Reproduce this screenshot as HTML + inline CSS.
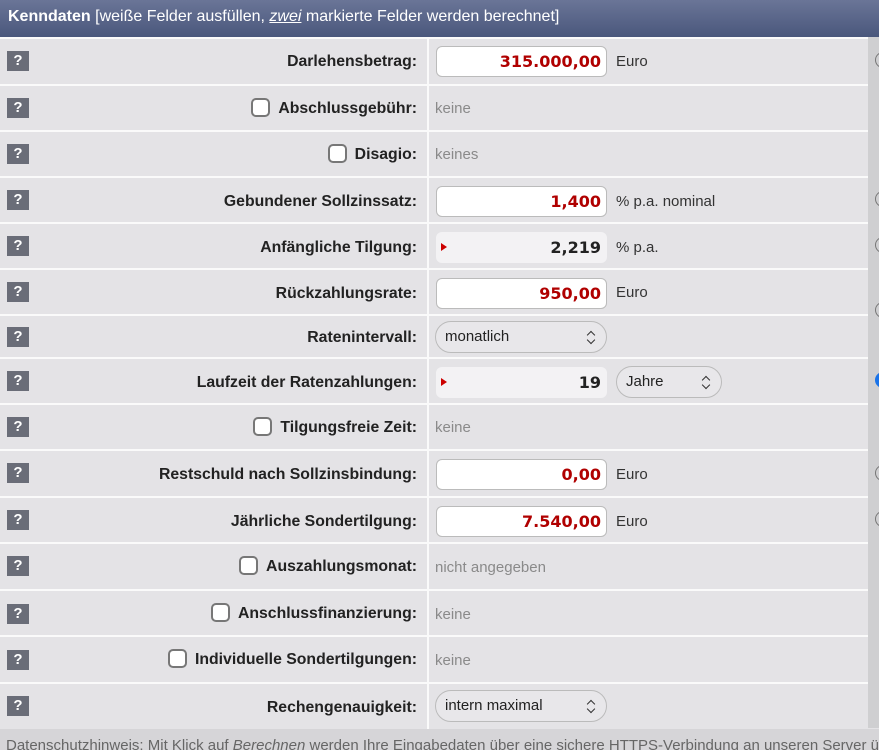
<!DOCTYPE html>
<html><head><meta charset="utf-8"><style>
*{box-sizing:border-box;margin:0;padding:0}
html,body{width:879px;height:750px;overflow:hidden}
body{background:#e4e3e6;font-family:"Liberation Sans",Arial,sans-serif;position:relative}
.hdr{position:absolute;left:0;top:0;width:879px;height:37px;background:linear-gradient(#6a7597,#4a577c);color:#fff;font-size:16px;padding:8px 0 0 8px;white-space:nowrap;overflow:hidden}
.row{position:absolute;left:0;width:868px;border-top:2px solid #fafafa}
.q{position:absolute;left:7px;width:22px;height:20px;background:#6a6d78;color:#fff;font-weight:bold;font-size:15px;text-align:center;line-height:20px}
.lab{position:absolute;right:451px;font-weight:bold;font-size:15.8px;color:#222;white-space:nowrap}
.vl{position:absolute;left:427px;top:0;bottom:0;border-left:2px solid #fafafa}
.cb{display:inline-block;width:19px;height:19px;border:2px solid #777;border-radius:5px;background:#fff;vertical-align:-4px;margin-right:8px}
.grey{position:absolute;left:435px;font-size:15px;color:#8a8a8a}
.inp{position:absolute;left:436px;width:171px;height:31px;background:#fff;border:1px solid #bbb;border-radius:6px;text-align:right;padding-right:5px;font-family:"DejaVu Sans",sans-serif;font-weight:bold;font-size:16px;color:#b00000;line-height:29px}
.calc{background:#f3f2f4;border-color:#f3f2f4;color:#222}
.calc:before{content:"";position:absolute;left:4px;top:10px;border-left:6px solid #c00;border-top:4.5px solid transparent;border-bottom:4.5px solid transparent}
.unit{position:absolute;font-size:15px;color:#333}
.sel{position:absolute;height:32px;border:1px solid #bbb;border-radius:16px;background:#e8e7ea;font-size:15px;color:#222;padding:6px 0 0 9px}
.sel:after{content:"";position:absolute;right:12px;top:10px;width:5px;height:5px;border-left:1.6px solid #333;border-top:1.6px solid #333;transform:rotate(45deg)}
.sel:before{content:"";position:absolute;right:12px;top:15px;width:5px;height:5px;border-right:1.6px solid #333;border-bottom:1.6px solid #333;transform:rotate(45deg)}
.rc{position:absolute;left:868px;width:11px;top:37px;height:691px;background:#cfcfd1;overflow:hidden}
.rad{position:absolute;left:7px;width:16px;height:16px;border:1.5px solid #777;border-radius:50%}
.foot{position:absolute;left:0;top:729px;width:879px;height:21px;background:#d6d5d8;color:#666;font-size:15px;padding:8px 0 0 6px;white-space:nowrap;overflow:hidden}
</style></head><body>
<div class="hdr"><b>Kenndaten</b> [weiße Felder ausfüllen, <i><u>zwei</u></i> markierte Felder werden berechnet]</div>
<div class="rc">
<div class="rad" style="top:15px"></div>
<div class="rad" style="top:154px"></div>
<div class="rad" style="top:200px"></div>
<div class="rad" style="top:265px"></div>
<div class="rad" style="top:335px;background:#1a73e8;border-color:#1a73e8"></div>
<div class="rad" style="top:428px"></div>
<div class="rad" style="top:474px"></div>
</div>

<div class="row" style="top:37px;height:47px"><div class="vl"></div><div class="q" style="top:12px">?</div><div class="lab" style="top:14px">Darlehensbetrag:</div><div class="inp" style="top:7px">315.000,00</div><div class="unit" style="left:616px;top:14px">Euro</div></div>
<div class="row" style="top:84px;height:46px"><div class="vl"></div><div class="q" style="top:12px">?</div><div class="lab" style="top:12px"><span class="cb"></span>Abschlussgebühr:</div><div class="grey" style="top:14px">keine</div></div>
<div class="row" style="top:130px;height:46px"><div class="vl"></div><div class="q" style="top:12px">?</div><div class="lab" style="top:12px"><span class="cb"></span>Disagio:</div><div class="grey" style="top:14px">keines</div></div>
<div class="row" style="top:176px;height:46px"><div class="vl"></div><div class="q" style="top:12px">?</div><div class="lab" style="top:15px">Gebundener Sollzinssatz:</div><div class="inp" style="top:8px">1,400</div><div class="unit" style="left:616px;top:15px">% p.a. nominal</div></div>
<div class="row" style="top:222px;height:46px"><div class="vl"></div><div class="q" style="top:12px">?</div><div class="lab" style="top:15px">Anfängliche Tilgung:</div><div class="inp calc" style="top:8px">2,219</div><div class="unit" style="left:616px;top:15px">% p.a.</div></div>
<div class="row" style="top:268px;height:46px"><div class="vl"></div><div class="q" style="top:12px">?</div><div class="lab" style="top:15px">Rückzahlungsrate:</div><div class="inp" style="top:8px">950,00</div><div class="unit" style="left:616px;top:14px">Euro</div></div>
<div class="row" style="top:314px;height:43px"><div class="vl"></div><div class="q" style="top:11px">?</div><div class="lab" style="top:13px">Ratenintervall:</div><div class="sel" style="left:435px;top:5px;width:172px">monatlich</div></div>
<div class="row" style="top:357px;height:46px"><div class="vl"></div><div class="q" style="top:12px">?</div><div class="lab" style="top:15px">Laufzeit der Ratenzahlungen:</div><div class="inp calc" style="top:8px">19</div><div class="sel" style="left:616px;top:7px;width:106px">Jahre</div></div>
<div class="row" style="top:403px;height:46px"><div class="vl"></div><div class="q" style="top:12px">?</div><div class="lab" style="top:12px"><span class="cb"></span>Tilgungsfreie Zeit:</div><div class="grey" style="top:14px">keine</div></div>
<div class="row" style="top:449px;height:47px"><div class="vl"></div><div class="q" style="top:12px">?</div><div class="lab" style="top:15px">Restschuld nach Sollzinsbindung:</div><div class="inp" style="top:8px">0,00</div><div class="unit" style="left:616px;top:15px">Euro</div></div>
<div class="row" style="top:496px;height:46px"><div class="vl"></div><div class="q" style="top:12px">?</div><div class="lab" style="top:15px">Jährliche Sondertilgung:</div><div class="inp" style="top:8px">7.540,00</div><div class="unit" style="left:616px;top:15px">Euro</div></div>
<div class="row" style="top:542px;height:47px"><div class="vl"></div><div class="q" style="top:12px">?</div><div class="lab" style="top:12px"><span class="cb"></span>Auszahlungsmonat:</div><div class="grey" style="top:15px">nicht angegeben</div></div>
<div class="row" style="top:589px;height:46px"><div class="vl"></div><div class="q" style="top:13px">?</div><div class="lab" style="top:12px"><span class="cb"></span>Anschlussfinanzierung:</div><div class="grey" style="top:15px">keine</div></div>
<div class="row" style="top:635px;height:47px"><div class="vl"></div><div class="q" style="top:13px">?</div><div class="lab" style="top:12px"><span class="cb"></span>Individuelle Sondertilgungen:</div><div class="grey" style="top:15px">keine</div></div>
<div class="row" style="top:682px;height:47px"><div class="vl"></div><div class="q" style="top:12px">?</div><div class="lab" style="top:15px">Rechengenauigkeit:</div><div class="sel" style="left:435px;top:6px;width:172px">intern maximal</div></div>
<div class="foot">Datenschutzhinweis: Mit Klick auf <i>Berechnen</i> werden Ihre Eingabedaten über eine sichere HTTPS-Verbindung an unseren Server übertragen</div>
</body></html>
